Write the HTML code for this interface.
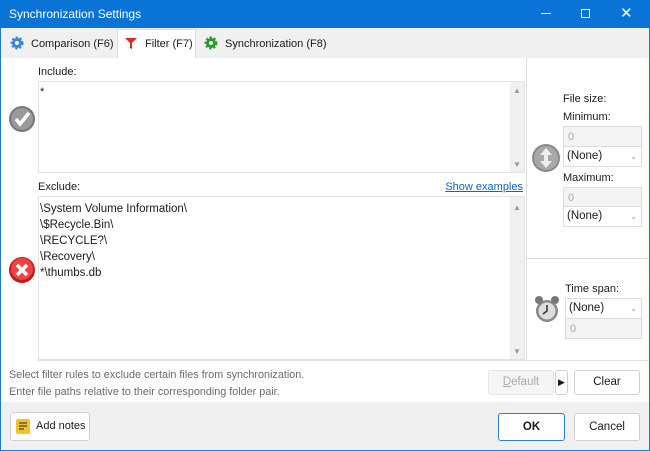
<!DOCTYPE html>
<html><head><style>
*{box-sizing:border-box;margin:0;padding:0}
body{width:650px;height:451px;overflow:hidden;font-family:"Liberation Sans",sans-serif;font-size:11px;color:#1a1a1a;background:#fff;position:relative}
.a{position:absolute}
.title{left:0;top:0;width:650px;height:28px;background:#0a74d6;color:#fff;font-size:12px}
.win{left:0;top:28px;width:650px;height:423px;border:1px solid #1f7ad6;border-top:none;background:#fff}
.tabs{left:1px;top:28px;width:648px;height:30px;background:#f0f0f0}
.ta{border:1px solid #e3e3e3;background:#fff}
.sb{background:#f0f0f0;width:14px}
.btn{border:1px solid #d0d0d0;background:#fff;border-radius:3px;text-align:center;font-size:11.5px}
.inp{border:1px solid #dcdcdc;background:#f3f3f3;color:#aaa;padding:4px 4px;height:21px}
.sel{border:1px solid #dcdcdc;background:#fff;padding:3px 3px;height:21px;font-size:11.5px}
.arr{color:#999;font-size:8px}
</style></head><body>
<div class="a title"><span class="a" style="left:9px;top:7px">Synchronization Settings</span>
<span class="a" style="left:541px;top:13px;width:10px;height:1px;background:#fff"></span>
<span class="a" style="left:581px;top:9px;width:9px;height:9px;border:1px solid #fff"></span>
<span class="a" style="left:620px;top:4px;font-size:15px">✕</span></div>
<div class="a win"></div>
<div class="a tabs"></div>
<svg class="a" style="left:10px;top:36px" width="14" height="14" viewBox="0 0 14 14"><circle cx="7" cy="7" r="5" fill="#3a86d8" stroke="#3a86d8" stroke-width="3" stroke-dasharray="2 1.7"/><circle cx="7" cy="7" r="2" fill="#fff"/></svg>
<span class="a" style="left:31px;top:38px">Comparison (F6)</span>
<div class="a" style="left:117px;top:29px;width:79px;height:29px;background:#fff;border:1px solid #ddd;border-bottom:none"></div>
<svg class="a" style="left:124px;top:36px" width="14" height="14" viewBox="0 0 14 14"><path d="M1 2H13L8 7V13L6 12V7Z" fill="#d42a2a"/></svg>
<span class="a" style="left:145px;top:38px">Filter (F7)</span>
<svg class="a" style="left:204px;top:36px" width="14" height="14" viewBox="0 0 14 14"><circle cx="7" cy="7" r="5" fill="#2a9a2a" stroke="#2a9a2a" stroke-width="3" stroke-dasharray="2 1.7"/><circle cx="7" cy="7" r="2" fill="#fff"/></svg>
<span class="a" style="left:225px;top:38px">Synchronization (F8)</span>

<span class="a" style="left:38px;top:66px">Include:</span>
<div class="a ta" style="left:38px;top:81px;width:487px;height:92px"></div>
<div class="a sb" style="left:510px;top:82px;height:90px"></div>
<span class="a arr" style="left:513px;top:86px">▲</span><span class="a arr" style="left:513px;top:160px">▼</span>
<span class="a" style="left:40px;top:86px">*</span>
<svg class="a" style="left:8px;top:105px" width="28" height="28"><circle cx="14" cy="14" r="13" fill="#777"/><circle cx="14" cy="14" r="11" fill="#9a9a9a"/><path d="M8 14L12 19L21 8" stroke="#fff" stroke-width="3.5" fill="none"/></svg>

<span class="a" style="left:38px;top:181px">Exclude:</span>
<span class="a" style="right:127px;top:181px;color:#0a66c8;text-decoration:underline">Show examples</span>
<div class="a ta" style="left:38px;top:196px;width:487px;height:164px"></div>
<div class="a sb" style="left:510px;top:197px;height:162px"></div>
<span class="a arr" style="left:513px;top:203px">▲</span><span class="a arr" style="left:513px;top:347px">▼</span>
<div class="a" style="left:40px;top:201px;line-height:16px;font-size:11.5px">\System Volume Information\<br>\$Recycle.Bin\<br>\RECYCLE?\<br>\Recovery\<br>*\thumbs.db</div>
<svg class="a" style="left:8px;top:256px" width="28" height="28"><circle cx="14" cy="14" r="13" fill="#c41818"/><circle cx="14" cy="13" r="11" fill="#e44"/><path d="M9 9L19 19M19 9L9 19" stroke="#fff" stroke-width="3.5"/></svg>

<div class="a" style="left:526px;top:58px;width:1px;height:303px;background:#ddd"></div>
<div class="a" style="left:527px;top:258px;width:121px;height:1px;background:#ddd"></div>
<div class="a" style="left:38px;top:360px;width:610px;height:1px;background:#ddd"></div>
<span class="a" style="left:563px;top:93px">File size:</span>
<span class="a" style="left:563px;top:111px">Minimum:</span>
<div class="a inp" style="left:563px;top:126px;width:79px">0</div>
<div class="a sel" style="left:563px;top:146px;width:79px">(None)<span class="a arr" style="right:4px;top:5px">⌄</span></div>
<span class="a" style="left:563px;top:172px">Maximum:</span>
<div class="a inp" style="left:563px;top:187px;width:79px">0</div>
<div class="a sel" style="left:563px;top:206px;width:79px">(None)<span class="a arr" style="right:4px;top:5px">⌄</span></div>
<svg class="a" style="left:531px;top:143px" width="30" height="30"><circle cx="15" cy="15" r="14" fill="#888"/><circle cx="15" cy="15" r="12" fill="#a8a8a8"/><path d="M15 5L21 12H17V18H21L15 25L9 18H13V12H9Z" fill="#eee"/></svg>
<span class="a" style="left:565px;top:283px">Time span:</span>
<div class="a sel" style="left:565px;top:298px;width:77px">(None)<span class="a arr" style="right:4px;top:5px">⌄</span></div>
<div class="a inp" style="left:565px;top:318px;width:77px">0</div>
<svg class="a" style="left:532px;top:293px" width="30" height="32"><circle cx="15" cy="18" r="11" fill="#888"/><circle cx="15" cy="18" r="8.5" fill="#ddd"/><circle cx="7" cy="7" r="4" fill="#777"/><circle cx="23" cy="7" r="4" fill="#777"/><path d="M15 12V18L11 21" stroke="#333" stroke-width="1.5" fill="none"/></svg>

<div class="a" style="left:9px;top:367px;color:#6a6a6a;line-height:17px;font-size:10.8px">Select filter rules to exclude certain files from synchronization.<br>Enter file paths relative to their corresponding folder pair.</div>
<div class="a btn" style="left:488px;top:370px;width:66px;height:25px;background:#f5f5f5;color:#aaa;line-height:23px;border-color:#e5e5e5"><u>D</u>efault</div>
<div class="a btn" style="left:555px;top:370px;width:13px;height:25px;line-height:23px;font-size:9px">▶</div>
<div class="a btn" style="left:574px;top:370px;width:66px;height:25px;line-height:23px">Clear</div>

<div class="a" style="left:1px;top:402px;width:648px;height:48px;background:#f0f0f0"></div>
<div class="a btn" style="left:10px;top:412px;width:80px;height:29px;line-height:27px;padding-left:25px;text-align:left;font-size:11px">Add notes</div>
<svg class="a" style="left:16px;top:419px" width="14" height="15"><rect width="14" height="15" rx="2" fill="#f2c12e"/><path d="M3 4H11M3 7H11M3 10H8" stroke="#444" stroke-width="1.3"/></svg>
<div class="a btn" style="left:498px;top:413px;width:67px;height:28px;line-height:26px;border-color:#2a7fd4;font-weight:bold">OK</div>
<div class="a btn" style="left:574px;top:413px;width:66px;height:28px;line-height:26px">Cancel</div>
</body></html>
